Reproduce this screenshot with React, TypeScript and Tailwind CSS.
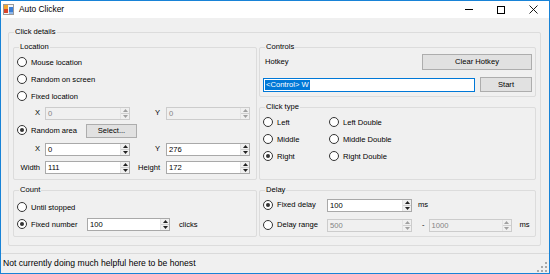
import React from 'react';

const font = { fontFamily: '"Liberation Sans", Arial, sans-serif' };

const Group = ({ label, className, children }: { label: string; className?: string; children?: React.ReactNode }) => (
  <div className={`relative border border-[#dcdcdc] rounded-[2px] ${className || ''}`}>
    <span className="absolute -top-[6px] left-[5px] bg-[#f0f0f0] px-[1px] leading-[10px]">{label}</span>
    {children}
  </div>
);

const Radio = ({ label, checked, className }: { label: string; checked?: boolean; className?: string }) => (
  <div className={`flex items-center gap-[4px] ${className || ''}`}>
    <span className="w-[10px] h-[10px] shrink-0 rounded-full border border-[#333333] bg-white flex items-center justify-center">
      {checked && <span className="w-[4px] h-[4px] rounded-full bg-[#333333]" />}
    </span>
    <span className="whitespace-nowrap">{label}</span>
  </div>
);

const Arrow = ({ up, disabled }: { up?: boolean; disabled?: boolean }) => (
  <svg width="5" height="3" viewBox="0 0 5 3">
    <path d={up ? 'M0 3 L2.5 0 L5 3 Z' : 'M0 0 L5 0 L2.5 3 Z'} fill={disabled ? '#a0a0a0' : '#222222'} />
  </svg>
);

const Spin = ({ value, width, disabled }: { value: string; width: string; disabled?: boolean }) => (
  <div
    className={`flex h-[13px] border ${width} ${
      disabled ? 'border-[#cccccc] bg-[#f0f0f0] text-[#838383]' : 'border-[#a9a9a9] bg-white text-black'
    }`}
  >
    <span className="flex-1 pl-[2px] leading-[11px]">{value}</span>
    <div className="w-[9px] flex flex-col border-l border-[#e3e3e3] bg-[#f0f0f0]">
      <div className="flex-1 flex items-center justify-center border-b border-[#d0d0d0]">
        <Arrow up disabled={disabled} />
      </div>
      <div className="flex-1 flex items-center justify-center">
        <Arrow disabled={disabled} />
      </div>
    </div>
  </div>
);

const Btn = ({ label, className }: { label: string; className: string }) => (
  <div className={`flex items-center justify-center border border-[#adadad] bg-[#e1e1e1] ${className}`}>{label}</div>
);

const TitleIcon = () => (
  <svg width="11" height="11" viewBox="0 0 11 11">
    <rect x="0.5" y="0.5" width="10" height="10" fill="#f6f6f6" stroke="#9a9a9a" />
    <rect x="1" y="1" width="4" height="4" fill="#f2a530" />
    <rect x="1" y="5" width="4" height="4" fill="#d9452b" />
    <rect x="6" y="3" width="4" height="5" fill="#3c7fd6" />
    <rect x="6" y="8" width="4" height="2" fill="#8db5e8" />
  </svg>
);

export default function App() {
  return (
    <div className="w-[550px] h-[274px] flex flex-col border border-[#1883d7] bg-[#f0f0f0] text-black text-[7.6px] overflow-hidden" style={font}>
      {/* title bar */}
      <div className="h-[17px] bg-white flex items-center">
        <div className="pl-[2px] pr-[5px] flex items-center"><TitleIcon /></div>
        <span className="text-[8.4px]">Auto Clicker</span>
        <div className="ml-auto flex h-full">
          <div className="w-[32px] flex items-center justify-center">
            <span className="w-[8px] h-px bg-black" />
          </div>
          <div className="w-[32px] flex items-center justify-center">
            <span className="w-[8px] h-[8px] border border-black" />
          </div>
          <div className="w-[32px] flex items-center justify-center">
            <svg width="9" height="9" viewBox="0 0 9 9">
              <path d="M0.5 0.5 L8.5 8.5 M8.5 0.5 L0.5 8.5" stroke="#000" strokeWidth="0.9" />
            </svg>
          </div>
        </div>
      </div>

      {/* client */}
      <div className="flex-1 pt-[14px] pl-[7px] pr-[8px] pb-[7px]">
        <Group label="Click details" className="h-full flex gap-[2px] pl-[4px] pr-[4px] pt-[14px] pb-[8px]">
          {/* left column */}
          <div className="w-[244px] flex flex-col gap-[10px]">
            <Group label="Location" className="h-[133px] pt-[6px]">
              <div className="h-[17px] flex items-center pl-[3px]"><Radio label="Mouse location" /></div>
              <div className="h-[17px] flex items-center pl-[3px]"><Radio label="Random on screen" /></div>
              <div className="h-[17px] flex items-center pl-[3px]"><Radio label="Fixed location" /></div>
              <div className="h-[16px] flex items-center">
                <span className="w-[26px] text-right">X</span>
                <div className="ml-[5px]"><Spin value="0" width="w-[85px]" disabled /></div>
                <span className="w-[30px] text-right">Y</span>
                <div className="ml-[6px]"><Spin value="0" width="w-[84px]" disabled /></div>
              </div>
              <div className="h-[19px] flex items-center pl-[3px]">
                <Radio label="Random area" checked className="w-[69px]" />
                <Btn label="Select..." className="w-[51px] h-[14px]" />
              </div>
              <div className="h-[18px] flex items-center">
                <span className="w-[26px] text-right">X</span>
                <div className="ml-[5px]"><Spin value="0" width="w-[85px]" /></div>
                <span className="w-[30px] text-right">Y</span>
                <div className="ml-[6px]"><Spin value="276" width="w-[84px]" /></div>
              </div>
              <div className="h-[19px] flex items-center">
                <span className="w-[26px] text-right">Width</span>
                <div className="ml-[5px]"><Spin value="111" width="w-[85px]" /></div>
                <span className="w-[30px] text-right">Height</span>
                <div className="ml-[6px]"><Spin value="172" width="w-[84px]" /></div>
              </div>
            </Group>
            <Group label="Count" className="h-[47px] pt-[8px]">
              <div className="h-[17px] flex items-center pl-[3px]"><Radio label="Until stopped" /></div>
              <div className="h-[17px] flex items-center pl-[3px]">
                <Radio label="Fixed number" checked className="w-[70px]" />
                <Spin value="100" width="w-[83px]" />
                <span className="ml-[9px]">clicks</span>
              </div>
            </Group>
          </div>

          {/* right column */}
          <div className="w-[277px] flex flex-col gap-[10px]">
            <Group label="Controls" className="h-[50px] pt-[6px] pr-[3px]">
              <div className="h-[16px] flex items-center">
                <span className="pl-[5px]">Hotkey</span>
                <Btn label="Clear Hotkey" className="ml-auto w-[110px] h-[16px]" />
              </div>
              <div className="mt-[7px] flex items-center pl-[3px]">
                <div className="w-[212px] h-[14px] border border-[#0078d7] bg-white flex items-center pl-[1px]">
                  <span className="bg-[#0078d7] text-white leading-[10px] px-[1px]">&lt;Control&gt; W</span>
                </div>
                <Btn label="Start" className="ml-[5px] w-[52px] h-[15px]" />
              </div>
            </Group>
            <Group label="Click type" className="h-[73px] pt-[6px]">
              {[
                ['Left', 'Left Double', false],
                ['Middle', 'Middle Double', false],
                ['Right', 'Right Double', true],
              ].map(([a, b, c]) => (
                <div key={a as string} className="h-[17px] flex items-center pl-[3px]">
                  <Radio label={a as string} checked={c as boolean} className="w-[66px]" />
                  <Radio label={b as string} />
                </div>
              ))}
            </Group>
            <Group label="Delay" className="h-[47px] pt-[4px]">
              <div className="h-[20px] flex items-center pl-[3px]">
                <Radio label="Fixed delay" checked className="w-[64px]" />
                <Spin value="100" width="w-[85px]" />
                <span className="ml-[6px]">ms</span>
              </div>
              <div className="h-[20px] flex items-center pl-[3px]">
                <Radio label="Delay range" className="w-[64px]" />
                <Spin value="500" width="w-[85px]" disabled />
                <span className="ml-[10px]">-</span>
                <div className="ml-[4px]"><Spin value="1000" width="w-[83px]" disabled /></div>
                <span className="ml-[8px]">ms</span>
              </div>
            </Group>
          </div>
        </Group>
      </div>

      {/* status bar */}
      <div className="relative h-[20px] border-t border-[#dadada] flex items-center pl-[2px] text-[8.6px]">
        <span>Not currently doing much helpful here to be honest</span>
        <div className="absolute right-[2px] bottom-[1px] grid grid-cols-3 gap-[2px]">
          <span />
          <span />
          <span className="w-[2px] h-[2px] bg-[#a8a8a8]" />
          <span />
          <span className="w-[2px] h-[2px] bg-[#a8a8a8]" />
          <span className="w-[2px] h-[2px] bg-[#a8a8a8]" />
          <span className="w-[2px] h-[2px] bg-[#a8a8a8]" />
          <span className="w-[2px] h-[2px] bg-[#a8a8a8]" />
          <span className="w-[2px] h-[2px] bg-[#a8a8a8]" />
        </div>
      </div>
    </div>
  );
}
